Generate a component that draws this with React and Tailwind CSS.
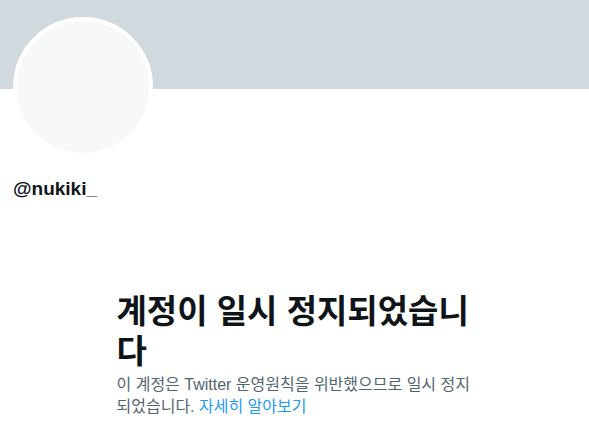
export default function App() {
  return (
    <div
      className="w-[589px] h-[432px] bg-white overflow-hidden"
      style={{ fontFamily: '"Liberation Sans", "Noto Sans CJK KR", sans-serif' }}
    >
      {/* Banner */}
      <div className="h-[89px] bg-[#cfd9de]"></div>

      {/* Profile header */}
      <div className="px-[13px]">
        <div className="-mt-[72px] w-[140px] h-[140px] rounded-full border-4 border-white bg-[#f7f9f9]"></div>
        <div className="mt-[20px] text-[19px] leading-[24px] font-bold text-[#0f1419]">@nukiki_</div>
      </div>

      {/* Suspended notice */}
      <div className="w-[356px] mx-auto mt-[91px]">
        <h1 className="text-[33px] leading-[40px] font-bold text-[#0f1419]">
          계정이 일시 정지되었습니다
        </h1>
        <p className="mt-[2px] text-[16px] leading-[22px] text-[#536471]">
          이 계정은 Twitter 운영원칙을 위반했으므로 일시 정지되었습니다.{" "}
          <span className="text-[#1d9bf0]">자세히 알아보기</span>
        </p>
      </div>
    </div>
  );
}
